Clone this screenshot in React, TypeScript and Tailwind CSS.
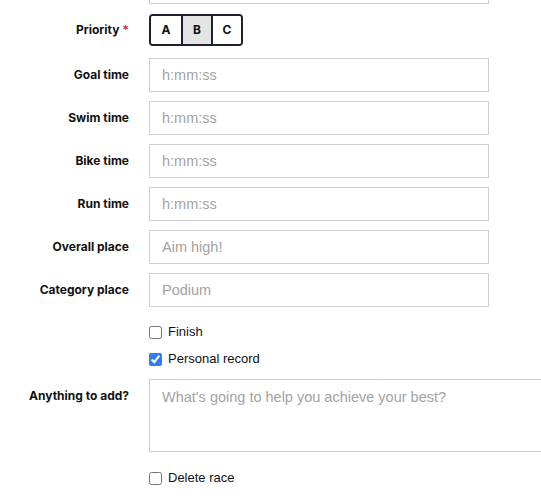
import React, { useState } from 'react';

const labelFont = { fontFamily: 'Inter, "Liberation Sans", sans-serif' };
const fieldFont = { fontFamily: '"Liberation Sans", Arial, sans-serif' };

function Row({ label, required, top = false, children, className = '' }: {
  label?: string;
  required?: boolean;
  top?: boolean;
  children: React.ReactNode;
  className?: string;
}) {
  return (
    <div className={`flex gap-[20px] ${top ? 'items-start' : 'items-center'} ${className}`}>
      <div
        className={`w-[129px] shrink-0 text-right text-[12px] font-bold text-[#111] ${top ? 'leading-[34px]' : ''}`}
        style={labelFont}
      >
        {label}
        {required && <span className="text-[#e0282e]"> *</span>}
      </div>
      {children}
    </div>
  );
}

function TextInput({ placeholder }: { placeholder: string }) {
  return (
    <input
      type="text"
      placeholder={placeholder}
      className="h-[34px] w-[340px] border border-[#cfcfcf] bg-white px-[12px] text-[14.5px] text-[#222] placeholder:text-[#a3a3a3] outline-none"
      style={fieldFont}
    />
  );
}

function Check({ label, defaultChecked = false, className = '' }: { label: string; defaultChecked?: boolean; className?: string }) {
  return (
    <Row className={className}>
      <label className="flex h-[18px] items-center gap-[6px] text-[13px] text-[#111]" style={fieldFont}>
        <input type="checkbox" defaultChecked={defaultChecked} className="m-0 h-[13px] w-[13px] accent-[#2f7cf6]" />
        {label}
      </label>
    </Row>
  );
}

export default function App() {
  const [priority, setPriority] = useState('B');

  return (
    <div className="h-[500px] w-[541px] overflow-hidden bg-white">
      <div className="flex flex-col">
        {/* previous field, scrolled mostly out of view */}
        <Row className="-mt-[30px]">
          <TextInput placeholder="" />
        </Row>

        <Row label="Priority" required className="mt-[10px]">
          <div className="flex h-[32px] overflow-hidden rounded-[4px] border-2 border-[#1d2033]">
            {['A', 'B', 'C'].map((p, i) => (
              <button
                key={p}
                onClick={() => setPriority(p)}
                className={`w-[30px] text-[12px] font-bold text-[#111] ${i > 0 ? 'border-l-2 border-[#1d2033]' : ''} ${
                  priority === p ? 'bg-[#e4e4e4]' : 'bg-white'
                }`}
                style={labelFont}
              >
                {p}
              </button>
            ))}
          </div>
        </Row>

        <Row label="Goal time" className="mt-[12px]">
          <TextInput placeholder="h:mm:ss" />
        </Row>
        <Row label="Swim time" className="mt-[9px]">
          <TextInput placeholder="h:mm:ss" />
        </Row>
        <Row label="Bike time" className="mt-[9px]">
          <TextInput placeholder="h:mm:ss" />
        </Row>
        <Row label="Run time" className="mt-[9px]">
          <TextInput placeholder="h:mm:ss" />
        </Row>
        <Row label="Overall place" className="mt-[9px]">
          <TextInput placeholder="Aim high!" />
        </Row>
        <Row label="Category place" className="mt-[9px]">
          <TextInput placeholder="Podium" />
        </Row>

        <Check label="Finish" className="mt-[16px]" />
        <Check label="Personal record" defaultChecked className="mt-[9px]" />

        <Row label="Anything to add?" top className="mt-[11px]">
          <textarea
            placeholder="What's going to help you achieve your best?"
            className="h-[73px] w-[420px] shrink-0 resize-none border border-[#cfcfcf] bg-white px-[12px] py-[7px] text-[14.5px] text-[#222] placeholder:text-[#a3a3a3] outline-none"
            style={fieldFont}
          />
        </Row>

        <Check label="Delete race" className="mt-[17px]" />
      </div>
    </div>
  );
}
